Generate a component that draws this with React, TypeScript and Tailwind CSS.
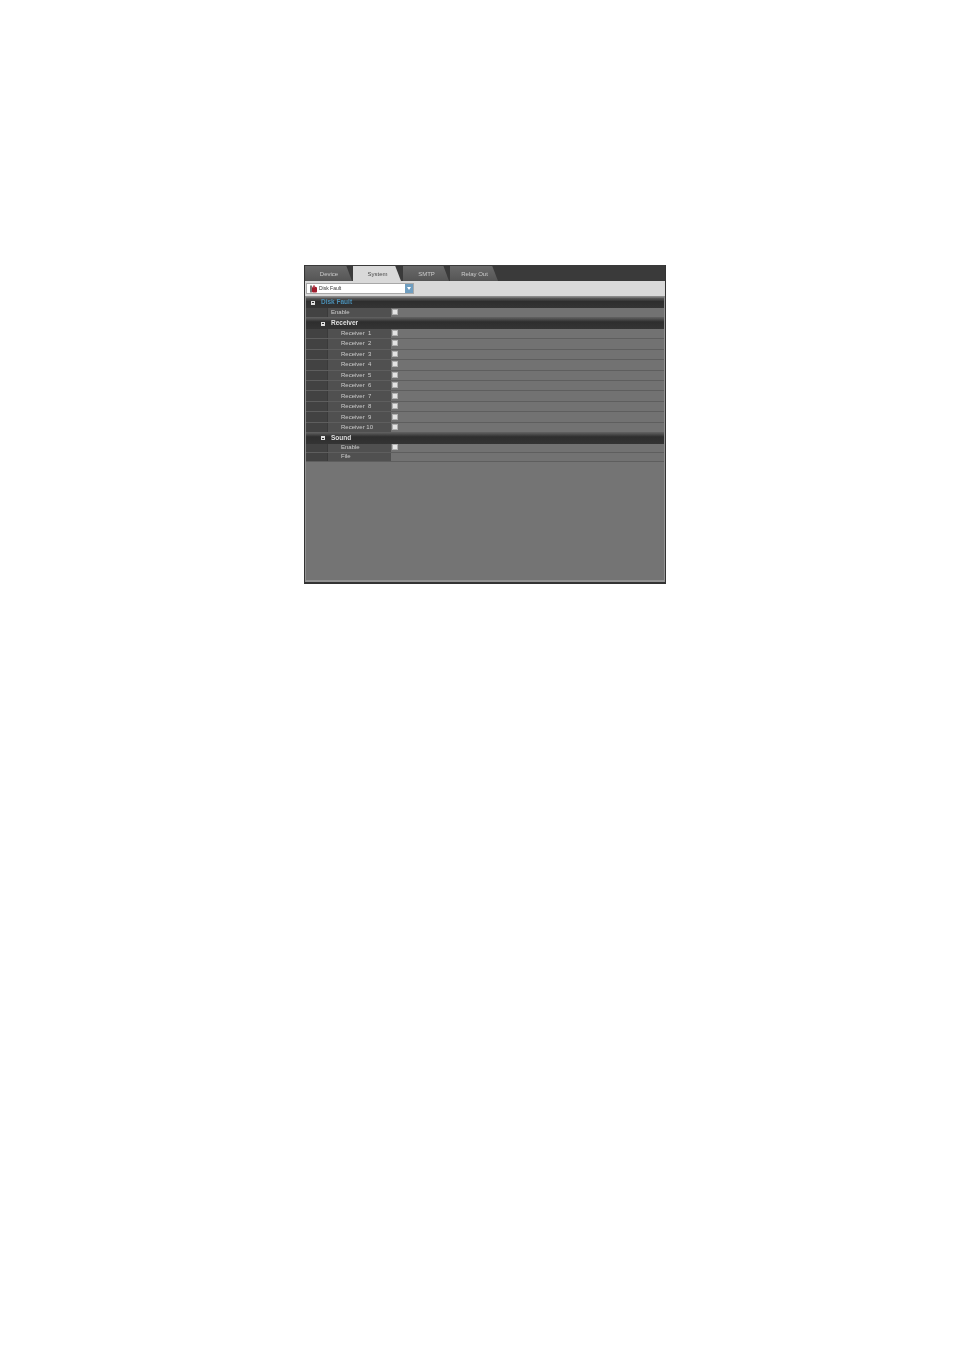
import React from "react";

function Row({ label, indent, check = true, h = "h-[10.45px]" }: { label: string; indent: string; check?: boolean; h?: string }) {
  return (
    <div className={`flex ${h} border-b border-[#5e5e5e]`}>
      <div className="w-[22px] shrink-0 bg-[#424242] border-r border-[#3a3a3a]" />
      <div className={`w-[63px] shrink-0 bg-[#505050] text-[#cccccc] flex items-center pb-[1px] ${indent}`}>
        <span className="text-[6px] leading-none whitespace-pre">{label}</span>
      </div>
      <div className="flex-1 bg-[#727272] flex items-center pl-[0.5px] pb-[1px]">
        {check && <div className="w-[6px] h-[6px] bg-[#e4e4e4] border border-[#b0b0b0]" />}
      </div>
    </div>
  );
}

function Header({ label, indent, color, boxIndent }: { label: string; indent: string; color: string; boxIndent: string }) {
  return (
    <div className={`flex items-center h-[10.45px] bg-[linear-gradient(#5a5a5a,#2e2e2e_35%,#343434)] ${boxIndent}`}>
      <div className="relative w-[4px] h-[4px] bg-[#e0e0e0] shrink-0">
        <div className="absolute left-[1px] top-[1.5px] w-[2px] h-[1px] bg-[#333333]" />
      </div>
      <span className={`text-[6.5px] font-bold leading-none ${color} ${indent}`}>{label}</span>
    </div>
  );
}

function Tab({ label, active, w, ml }: { label: string; active?: boolean; w: string; ml: string }) {
  return (
    <div
      className={`${w} ${ml} h-[15px] flex items-center justify-center pl-[1px] [clip-path:polygon(0_0,88%_0,100%_100%,0_100%)] ${
        active ? "bg-[#d9d9d9] text-[#4a4a4a]" : "bg-[linear-gradient(#6a6a6a,#555555)] text-[#cccccc]"
      }`}
    >
      <span className="text-[6px] leading-none">{label}</span>
    </div>
  );
}

export default function App() {
  const receivers = ["Receiver  1", "Receiver  2", "Receiver  3", "Receiver  4", "Receiver  5", "Receiver  6", "Receiver  7", "Receiver  8", "Receiver  9", "Receiver 10"];
  return (
    <div className="w-[954px] h-[1350px] bg-white pt-[265px] pl-[304px] font-['Liberation_Sans',sans-serif]">
      <div className="w-[362px] h-[319px] flex flex-col bg-[#3a3a3a] border-l border-r border-b-2 border-[#333333] blur-[0.25px]">
        <div className="h-[16px] flex items-end shrink-0 bg-[#3a3a3a]">
          <Tab label="Device" w="w-[47px]" ml="ml-[0px]" />
          <Tab label="System" active w="w-[48px]" ml="ml-[1px]" />
          <Tab label="SMTP" w="w-[46px]" ml="ml-[2px]" />
          <Tab label="Relay Out" w="w-[48px]" ml="ml-[1px]" />
        </div>
        <div className="h-[15px] shrink-0 bg-[#d9d9d9] flex items-center pl-[1px]">
          <div className="w-[108px] h-[11px] bg-white border border-[#a8a8a8] flex items-center justify-between">
            <div className="flex items-center pl-[3px] gap-[2px]">
              <svg width="7" height="8" viewBox="0 0 7 8">
                <rect x="0" y="0.5" width="2" height="7" fill="#777777" />
                <rect x="2" y="2" width="5" height="5.5" rx="1" fill="#a01c2c" />
                <circle cx="4" cy="1.5" r="1.2" fill="#b8505c" />
              </svg>
              <span className="text-[5px] leading-none text-[#333333]">Disk Fault</span>
            </div>
            <div className="w-[8px] h-[9px] bg-[#6f9ec0] flex items-center justify-center">
              <div className="w-0 h-0 border-l-[2px] border-r-[2px] border-t-[3px] border-l-transparent border-r-transparent border-t-white" />
            </div>
          </div>
        </div>
        <div className="flex-1 bg-[#929292] px-[1px] pb-[2px] flex flex-col min-h-0">
          <div className="flex-1 bg-[#747474] border-t border-[#8a8a8a] pt-[0.5px]">
            <Header label="Disk Fault" color="text-[#4a8fb5]" indent="ml-[6px]" boxIndent="pl-[5px]" />
            <Row label="Enable" indent="pl-[3px]" />
            <Header label="Receiver" color="text-[#e0e0e0]" indent="ml-[6px]" boxIndent="pl-[15px]" />
            {receivers.map((r) => (
              <Row key={r} label={r} indent="pl-[13px]" />
            ))}
            <Header label="Sound" color="text-[#e0e0e0]" indent="ml-[6px]" boxIndent="pl-[15px]" />
            <Row label="Enable" indent="pl-[13px]" h="h-[9px]" />
            <Row label="File" indent="pl-[13px]" check={false} h="h-[9px]" />
          </div>
        </div>
      </div>
    </div>
  );
}
